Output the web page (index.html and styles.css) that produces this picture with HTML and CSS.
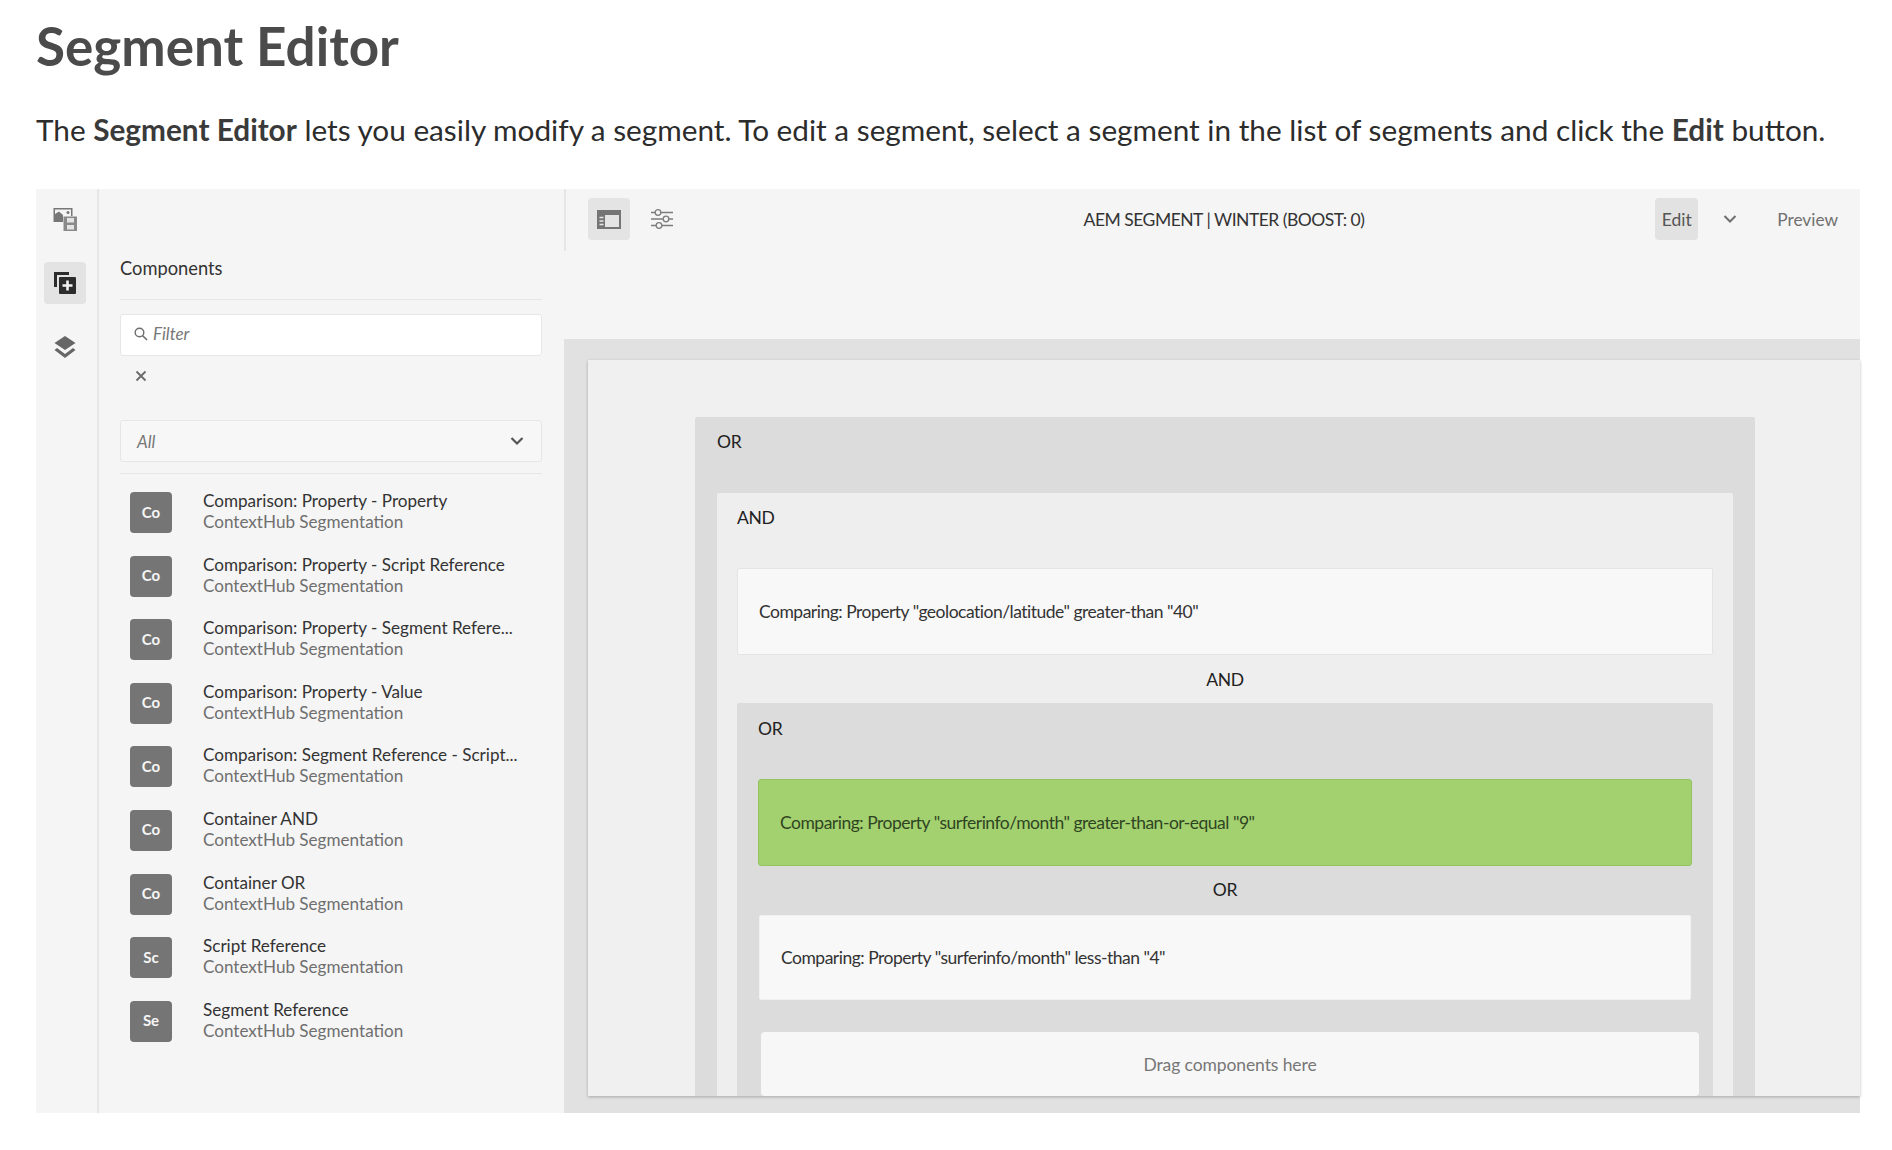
FILE: index.html
```html
<!DOCTYPE html>
<html lang="en">
<head>
<meta charset="utf-8">
<title>Segment Editor</title>
<link rel="stylesheet" href="styles.css">
</head>
<body>
<h1 class="title">Segment Editor</h1>
<p class="intro">The <strong>Segment Editor</strong> lets you easily modify a segment. To edit a segment, select a segment in the list of segments and click the <strong>Edit</strong> button.</p>
<div class="shot">
  <nav class="rail">
    <div class="rail-btn">
      <svg width="26" height="26" viewBox="0 0 26 26"><path d="M1.500 2h19v8h-1.500V3.500H3V8l4-2.500L11 9v7H1.500z" fill="#777"/><circle cx="16" cy="6.500" r="1.500" fill="#777"/><rect x="11.500" y="10.500" width="13.500" height="14.500" fill="#8a8a8a"/><path d="M15 12h7v4.500h-7zM15 19h7v4.500h-7z" fill="#e4e4e4"/></svg>
    </div>
    <div class="rail-btn rail-btn-active">
      <svg width="22" height="22" viewBox="0 0 22 22"><path d="M0 0h15v3H3v12H0z" fill="#2c2c2c"/><rect x="5" y="5" width="17" height="17" rx="1" fill="#2c2c2c"/><path d="M12.200 8.500h2.600v3.700h3.700v2.600h-3.700v3.700h-2.600v-3.700H8.500v-2.600h3.700z" fill="#f2f2f2"/></svg>
    </div>
    <div class="rail-btn">
      <svg width="24" height="24" viewBox="0 0 24 24"><path d="M12 1l10.500 7L12 15 1.500 8z" fill="#666"/><path d="M4 13l-2.500 2L12 23l10.500-8L20 13l-8 6z" fill="#666"/></svg>
    </div>
  </nav>
  <aside class="panel">
    <h2 class="panel-title">Components</h2>
    <label class="filter">
      <svg class="icon" width="14" height="14" viewBox="0 0 14 14"><circle cx="5.500" cy="5.500" r="4.300" fill="none" stroke="#6e6e6e" stroke-width="1.400"/><path d="M8.700 8.700L13 13" stroke="#6e6e6e" stroke-width="1.600"/></svg>
      <span class="placeholder">Filter</span>
    </label>
    <div class="clear">
      <svg class="icon" width="12" height="12" viewBox="0 0 12 12"><path d="M1.500 1.500l9 9M10.500 1.500l-9 9" stroke="#6a6a6a" stroke-width="1.800"/></svg>
    </div>
    <div class="select">
      <span class="placeholder">All</span>
      <svg class="icon" width="14" height="10" viewBox="0 0 14 10"><path d="M1.500 2L7 7.500 12.500 2" fill="none" stroke="#555" stroke-width="2.200"/></svg>
    </div>
    <ul class="list">
      <li class="item"><span class="badge">Co</span><div class="item-text"><span class="item-name">Comparison: Property - Property</span><span class="item-sub">ContextHub Segmentation</span></div></li>
      <li class="item"><span class="badge">Co</span><div class="item-text"><span class="item-name">Comparison: Property - Script Reference</span><span class="item-sub">ContextHub Segmentation</span></div></li>
      <li class="item"><span class="badge">Co</span><div class="item-text"><span class="item-name">Comparison: Property - Segment Refere...</span><span class="item-sub">ContextHub Segmentation</span></div></li>
      <li class="item"><span class="badge">Co</span><div class="item-text"><span class="item-name">Comparison: Property - Value</span><span class="item-sub">ContextHub Segmentation</span></div></li>
      <li class="item"><span class="badge">Co</span><div class="item-text"><span class="item-name">Comparison: Segment Reference - Script...</span><span class="item-sub">ContextHub Segmentation</span></div></li>
      <li class="item"><span class="badge">Co</span><div class="item-text"><span class="item-name">Container AND</span><span class="item-sub">ContextHub Segmentation</span></div></li>
      <li class="item"><span class="badge">Co</span><div class="item-text"><span class="item-name">Container OR</span><span class="item-sub">ContextHub Segmentation</span></div></li>
      <li class="item"><span class="badge">Sc</span><div class="item-text"><span class="item-name">Script Reference</span><span class="item-sub">ContextHub Segmentation</span></div></li>
      <li class="item"><span class="badge">Se</span><div class="item-text"><span class="item-name">Segment Reference</span><span class="item-sub">ContextHub Segmentation</span></div></li>
    </ul>
  </aside>
  <main class="editor">
    <header class="toolbar">
      <div class="tool-left">
        <div class="tool-btn tool-btn-active">
          <svg width="24" height="19" viewBox="0 0 24 19"><rect x="1" y="1" width="22" height="17" fill="none" stroke="#757575" stroke-width="2"/><rect x="1" y="1" width="22" height="4" fill="#757575"/><rect x="1" y="1" width="7" height="17" fill="#757575"/><path d="M2.500 7.500h4M2.500 11h4M2.500 14.500h4" stroke="#e6e6e6" stroke-width="1.300"/></svg>
        </div>
        <div class="tool-btn">
          <svg width="24" height="20" viewBox="0 0 24 20"><g fill="none" stroke="#7d7d7d" stroke-width="1.300"><path d="M1 3.500h4M11 3.500h12M1 10h12M19 10h4M1 16.500h5M12 16.500h11"/><circle cx="8" cy="3.500" r="2.800"/><circle cx="16" cy="10" r="2.800"/><circle cx="9" cy="16.500" r="2.800"/></g></svg>
        </div>
      </div>
      <div class="tool-title">AEM SEGMENT | WINTER (BOOST: 0)</div>
      <div class="tool-right">
        <span class="edit-btn">Edit</span>
        <svg class="caret" width="14" height="10" viewBox="0 0 14 10"><path d="M1.500 2L7 7.500 12.500 2" fill="none" stroke="#707070" stroke-width="2"/></svg>
        <span class="preview">Preview</span>
      </div>
    </header>
    <div class="stage">
      <div class="canvas">
        <section class="group group-or-outer">
          <div class="group-label">OR</div>
          <section class="group group-and">
            <div class="group-label">AND</div>
            <div class="rule">Comparing: Property "geolocation/latitude" greater-than "40"</div>
            <div class="joiner">AND</div>
            <section class="group group-or-inner">
              <div class="group-label">OR</div>
              <div class="rule rule-selected">Comparing: Property "surferinfo/month" greater-than-or-equal "9"</div>
              <div class="joiner joiner-tall">OR</div>
              <div class="rule rule-last">Comparing: Property "surferinfo/month" less-than "4"</div>
              <div class="dropzone">Drag components here</div>
            </section>
          </section>
        </section>
      </div>
    </div>
  </main>
</div>
</body>
</html>
```
FILE: styles.css
```css
* { box-sizing: border-box; }
html, body { margin: 0; padding: 0; background: #fff; }
body { font-family: Lato, "Open Sans", sans-serif; height: 1150px; overflow: hidden; padding: 0 32px 0 36px; }
.icon { display: block; flex: none; }
.title { margin: 0; padding-top: 13px; height: 103px; font-size: 53px; line-height: 66px; font-weight: 700; color: #4b4b4b; }
.intro { margin: 0; height: 86px; font-size: 29.740px; line-height: 54px; color: #2c2c2c; white-space: nowrap; }
.intro strong { font-weight: 700; color: #3a3a3a; }
.shot { display: flex; width: 1824px; height: 924px; background: #f5f5f5; }
.rail { flex: 0 0 63px; border-right: 2px solid #e6e6e6; padding: 9px 0 0 8px; display: flex; flex-direction: column; gap: 22px; }
.rail-btn { width: 42px; height: 42px; display: flex; align-items: center; justify-content: center; border-radius: 4px; }
.rail-btn-active { background: #e3e3e3; }
.panel { flex: 0 0 465px; padding: 0 22px 0 21px; }
.panel-title { margin: 0; height: 111px; padding-top: 64px; border-bottom: 1px solid #e6e6e6; font-size: 18.300px; line-height: 30px; font-weight: 400; color: #333; }
.filter, .select { display: flex; align-items: center; height: 42px; border-radius: 3px; border: 1px solid #e6e6e6; }
.filter { margin-top: 14px; padding: 0 0 3px 13px; gap: 5px; background: #fff; }
.placeholder { font-size: 17px; font-style: italic; color: #777; }
.clear { height: 64px; padding: 14px 0 0 15px; }
.select { justify-content: space-between; padding: 0 17px 0 16px; background: #f7f7f7; }
.list { list-style: none; margin: 11px 0 0; padding: 18px 0 0 10px; border-top: 1px solid #e6e6e6; }
.item { display: flex; height: 63.600px; gap: 31px; }
.badge { flex: 0 0 42px; height: 41px; display: flex; align-items: center; justify-content: center; border-radius: 4px; background: #757575; color: #f5f5f5; font-size: 15px; font-weight: 700; padding-bottom: 2px; }
.item-text { display: flex; flex-direction: column; margin-top: -2px; }
.item-name { font-size: 17.100px; line-height: 21px; color: #333; white-space: nowrap; }
.item-sub { font-size: 17.100px; line-height: 21px; color: #6f6f6f; white-space: nowrap; }
.editor { flex: 1; min-width: 0; display: flex; flex-direction: column; }
.toolbar { height: 150px; display: grid; grid-template-columns: 1fr auto 1fr; align-items: start; }
.tool-left { display: flex; gap: 11px; height: 62px; padding: 9px 0 0 22px; border-left: 2px solid #e6e6e6; }
.tool-btn { width: 42px; height: 42px; display: flex; align-items: center; justify-content: center; border-radius: 4px; }
.tool-btn-active { background: #e4e4e4; }
.tool-title { margin: 9px 24px 0 48px; font-size: 17.500px; line-height: 44px; color: #333; white-space: nowrap; letter-spacing: -0.5px; }
.tool-right { display: flex; align-items: center; justify-content: flex-end; height: 42px; margin-top: 9px; padding-right: 22px; }
.edit-btn { width: 43px; height: 42px; display: flex; align-items: center; justify-content: center; border-radius: 4px; background: #e2e2e2; color: #555; font-size: 17.500px; }
.caret { margin: 0 40px 0 25px; }
.preview { font-size: 17.300px; color: #707070; }
.stage { flex: 1; min-height: 0; background: #e1e1e1; padding: 21px 0 17px 24px; }
.canvas { height: 100%; overflow: hidden; background: #f0f0f0; padding-top: 57px; box-shadow: 0 1px 3px rgba(0,0,0,.25); }
.group { border-radius: 2px; }
.group-or-outer { width: 1060px; margin: 0 0 0 107px; padding: 0 22px; background: #dcdcdc; }
.group-and { background: #eeeeee; padding: 0 20px; }
.group-or-inner { background: #dcdcdc; padding: 0 21px 30px; }
.group-label { height: 76px; padding-top: 13px; font-size: 17.500px; line-height: 24px; color: #222; letter-spacing: -0.3px; }
.group-and > .group-label { height: 75px; }
.group-or-inner > .group-label { padding-top: 14px; }
.rule { height: 87px; padding: 0 21px; display: flex; align-items: center; background: #f8f8f8; border: 1px solid #e4e4e4; border-radius: 2px; font-size: 17.500px; color: #333; letter-spacing: -0.5px; }
.rule-selected { background: #a4d170; border-color: #93c462; border-radius: 3px; color: #2f4522; }
.rule-last { height: 85px; margin: 0 1px; border-color: #f1f1f1; }
.joiner { height: 48px; display: flex; align-items: center; justify-content: center; font-size: 17.500px; color: #222; letter-spacing: -0.3px; }
.joiner-tall { height: 49px; padding-bottom: 3px; }
.dropzone { height: 64px; margin: 32px -7px 0 3px; display: flex; align-items: center; justify-content: center; background: #f7f7f7; border-radius: 4px; font-size: 17.500px; color: #777; letter-spacing: -0.1px; }
```
